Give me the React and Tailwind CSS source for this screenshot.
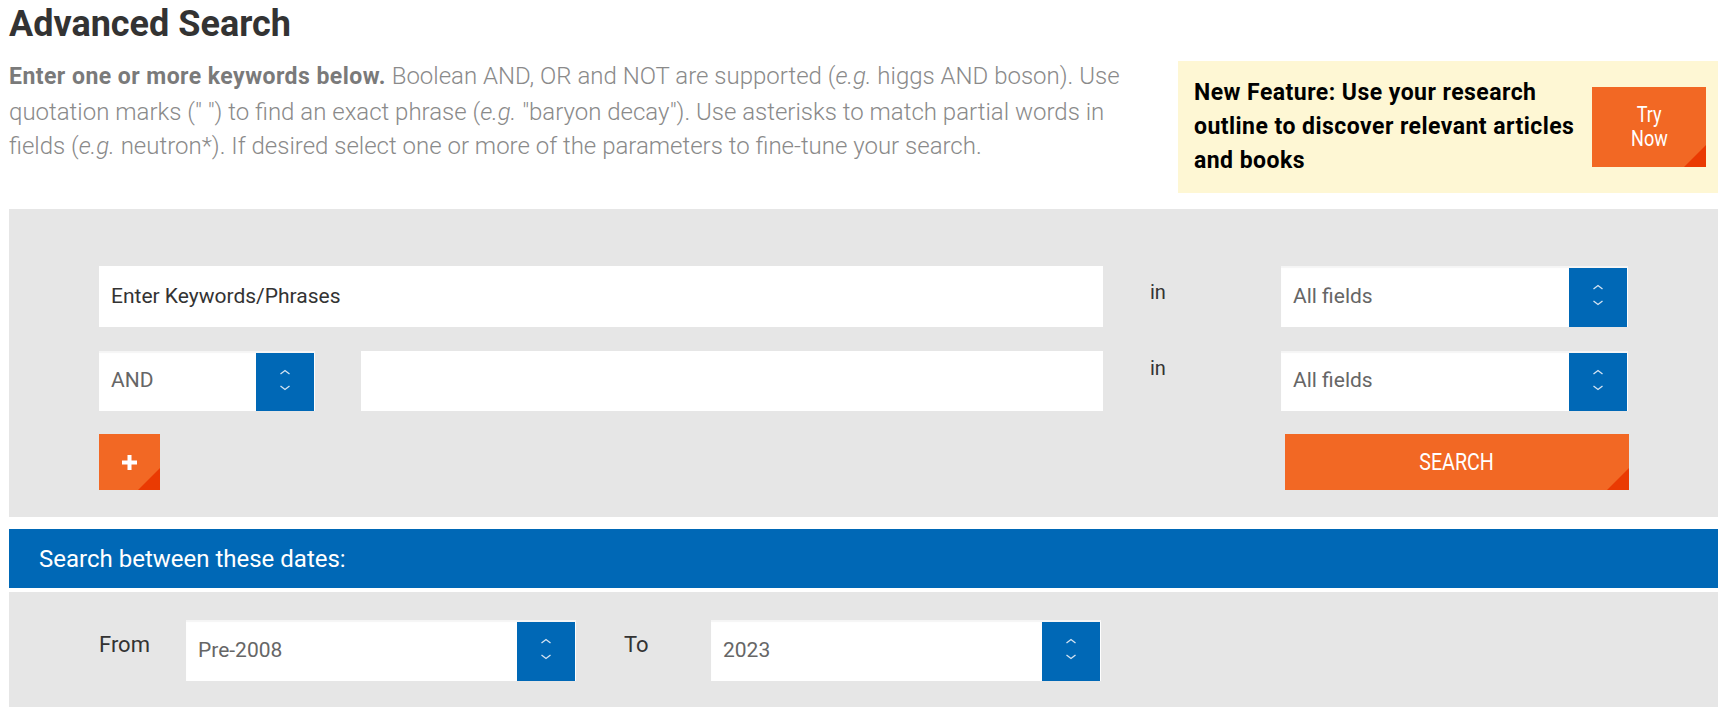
import React from 'react';

const Chevrons = () => (
    <svg width="12" height="22" viewBox="0 0 12 22" fill="none" className="-mt-[5px]">
        <path d="M1.5 5 L6 1.5 L10.5 5" stroke="#d6e4f2" strokeWidth="1.3" />
        <path d="M1.5 17 L6 20.5 L10.5 17" stroke="#d6e4f2" strokeWidth="1.3" />
    </svg>
);

// white select box with the blue arrow block on the right
const Select = ({ value, className = '' }) => (
    <div className={`bg-white flex items-stretch shadow-[inset_0_2px_1px_rgba(0,0,0,0.04)] ${className}`}>
        <div className="flex-1 flex items-center pl-[12px] text-[21px] text-[#666]">{value}</div>
        <div className="w-[58px] mt-[2px] mr-[1px] bg-[#0068b6] flex items-center justify-center">
            <Chevrons />
        </div>
    </div>
);

const Corner = () => (
    <span className="absolute right-0 bottom-0 w-0 h-0 border-l-[22px] border-l-transparent border-b-[22px] border-b-[#ea3a02]" />
);

const Condensed = ({ children }) => (
    <span className="inline-block scale-x-[0.82]">{children}</span>
);

const App = () => {
    return (
        <div className="w-[1727px] min-h-[716px] bg-white px-[9px] font-['Roboto','Liberation_Sans',sans-serif]">
            <h1 className="text-[36px] leading-[48px] font-bold text-[#333]">Advanced Search</h1>

            <div className="flex items-start justify-between">
                <p className="mt-[11px] w-[1155px] text-[24px] leading-[34.5px] font-light text-[#8a8a8a]">
                    <strong className="font-bold text-[23px] tracking-[0.02em] text-[#7a7a7a]">Enter one or more keywords below.</strong> Boolean AND, OR and NOT are supported (<em>e.g.</em> higgs AND boson). Use<br />
                    quotation marks (" ") to find an exact phrase (<em>e.g.</em> "baryon decay"). Use asterisks to match partial words in<br />
                    fields (<em>e.g.</em> neutron*). If desired select one or more of the parameters to fine-tune your search.
                </p>

                <div className="mt-[13px] w-[540px] h-[132px] bg-[#fef7d4] flex items-center justify-between pl-[16px] pr-[12px]">
                    <div className="w-[395px] text-[23px] tracking-[0.02em] leading-[33.7px] font-bold text-black">
                        New Feature: Use your research outline to discover relevant articles and books
                    </div>
                    <button className="relative w-[114px] h-[80px] bg-[#f26824] text-white text-[22px] leading-[24px] flex flex-col items-center justify-center">
                        <Condensed>Try</Condensed>
                        <Condensed>Now</Condensed>
                        <Corner />
                    </button>
                </div>
            </div>

            {/* keyword rows */}
            <div className="mt-[16px] bg-[#e6e6e6] px-[90px] pt-[57px] pb-[27px]">
                <div className="flex h-[61px]">
                    <div className="flex-1 bg-white flex items-center pl-[12px] text-[21px] text-[#333]">
                        Enter Keywords/Phrases
                    </div>
                    <div className="w-[178px] pl-[47px] pt-[14px] text-[20px] leading-[24px] text-[#333]">in</div>
                    <Select value="All fields" className="w-[347px]" />
                </div>

                <div className="mt-[24px] flex h-[60px]">
                    <div className="flex-1 flex">
                        <Select value="AND" className="w-[216px]" />
                        <div className="flex-1 ml-[46px] bg-white" />
                    </div>
                    <div className="w-[178px] pl-[47px] pt-[5px] text-[20px] leading-[24px] text-[#333]">in</div>
                    <Select value="All fields" className="w-[347px]" />
                </div>

                <div className="mt-[23px] flex justify-between">
                    <button className="relative w-[61px] h-[56px] bg-[#f26824] flex items-center justify-center">
                        <svg width="15" height="15" viewBox="0 0 15 15">
                            <rect x="5.5" y="0" width="4" height="15" fill="#fff" />
                            <rect x="0" y="5.5" width="15" height="4" fill="#fff" />
                        </svg>
                        <Corner />
                    </button>
                    <button className="relative w-[344px] h-[56px] -mr-[1px] bg-[#f26824] text-white text-[24px] flex items-center justify-center">
                        <Condensed>SEARCH</Condensed>
                        <Corner />
                    </button>
                </div>
            </div>

            {/* dates */}
            <div className="mt-[12px] h-[59px] bg-[#0068b6] flex items-center pl-[30px] text-[24px] text-white">
                Search between these dates:
            </div>
            <div className="mt-[4px] h-[115px] bg-[#e6e6e6] px-[90px] pt-[28px] flex items-start">
                <div className="w-[87px] pt-[12px] text-[22px] leading-[26px] text-[#333]">From</div>
                <Select value="Pre-2008" className="w-[390px] h-[61px]" />
                <div className="w-[87px] ml-[48px] pt-[12px] text-[22px] leading-[26px] text-[#333]">To</div>
                <Select value="2023" className="w-[390px] h-[61px]" />
            </div>
        </div>
    );
};

export default App;
